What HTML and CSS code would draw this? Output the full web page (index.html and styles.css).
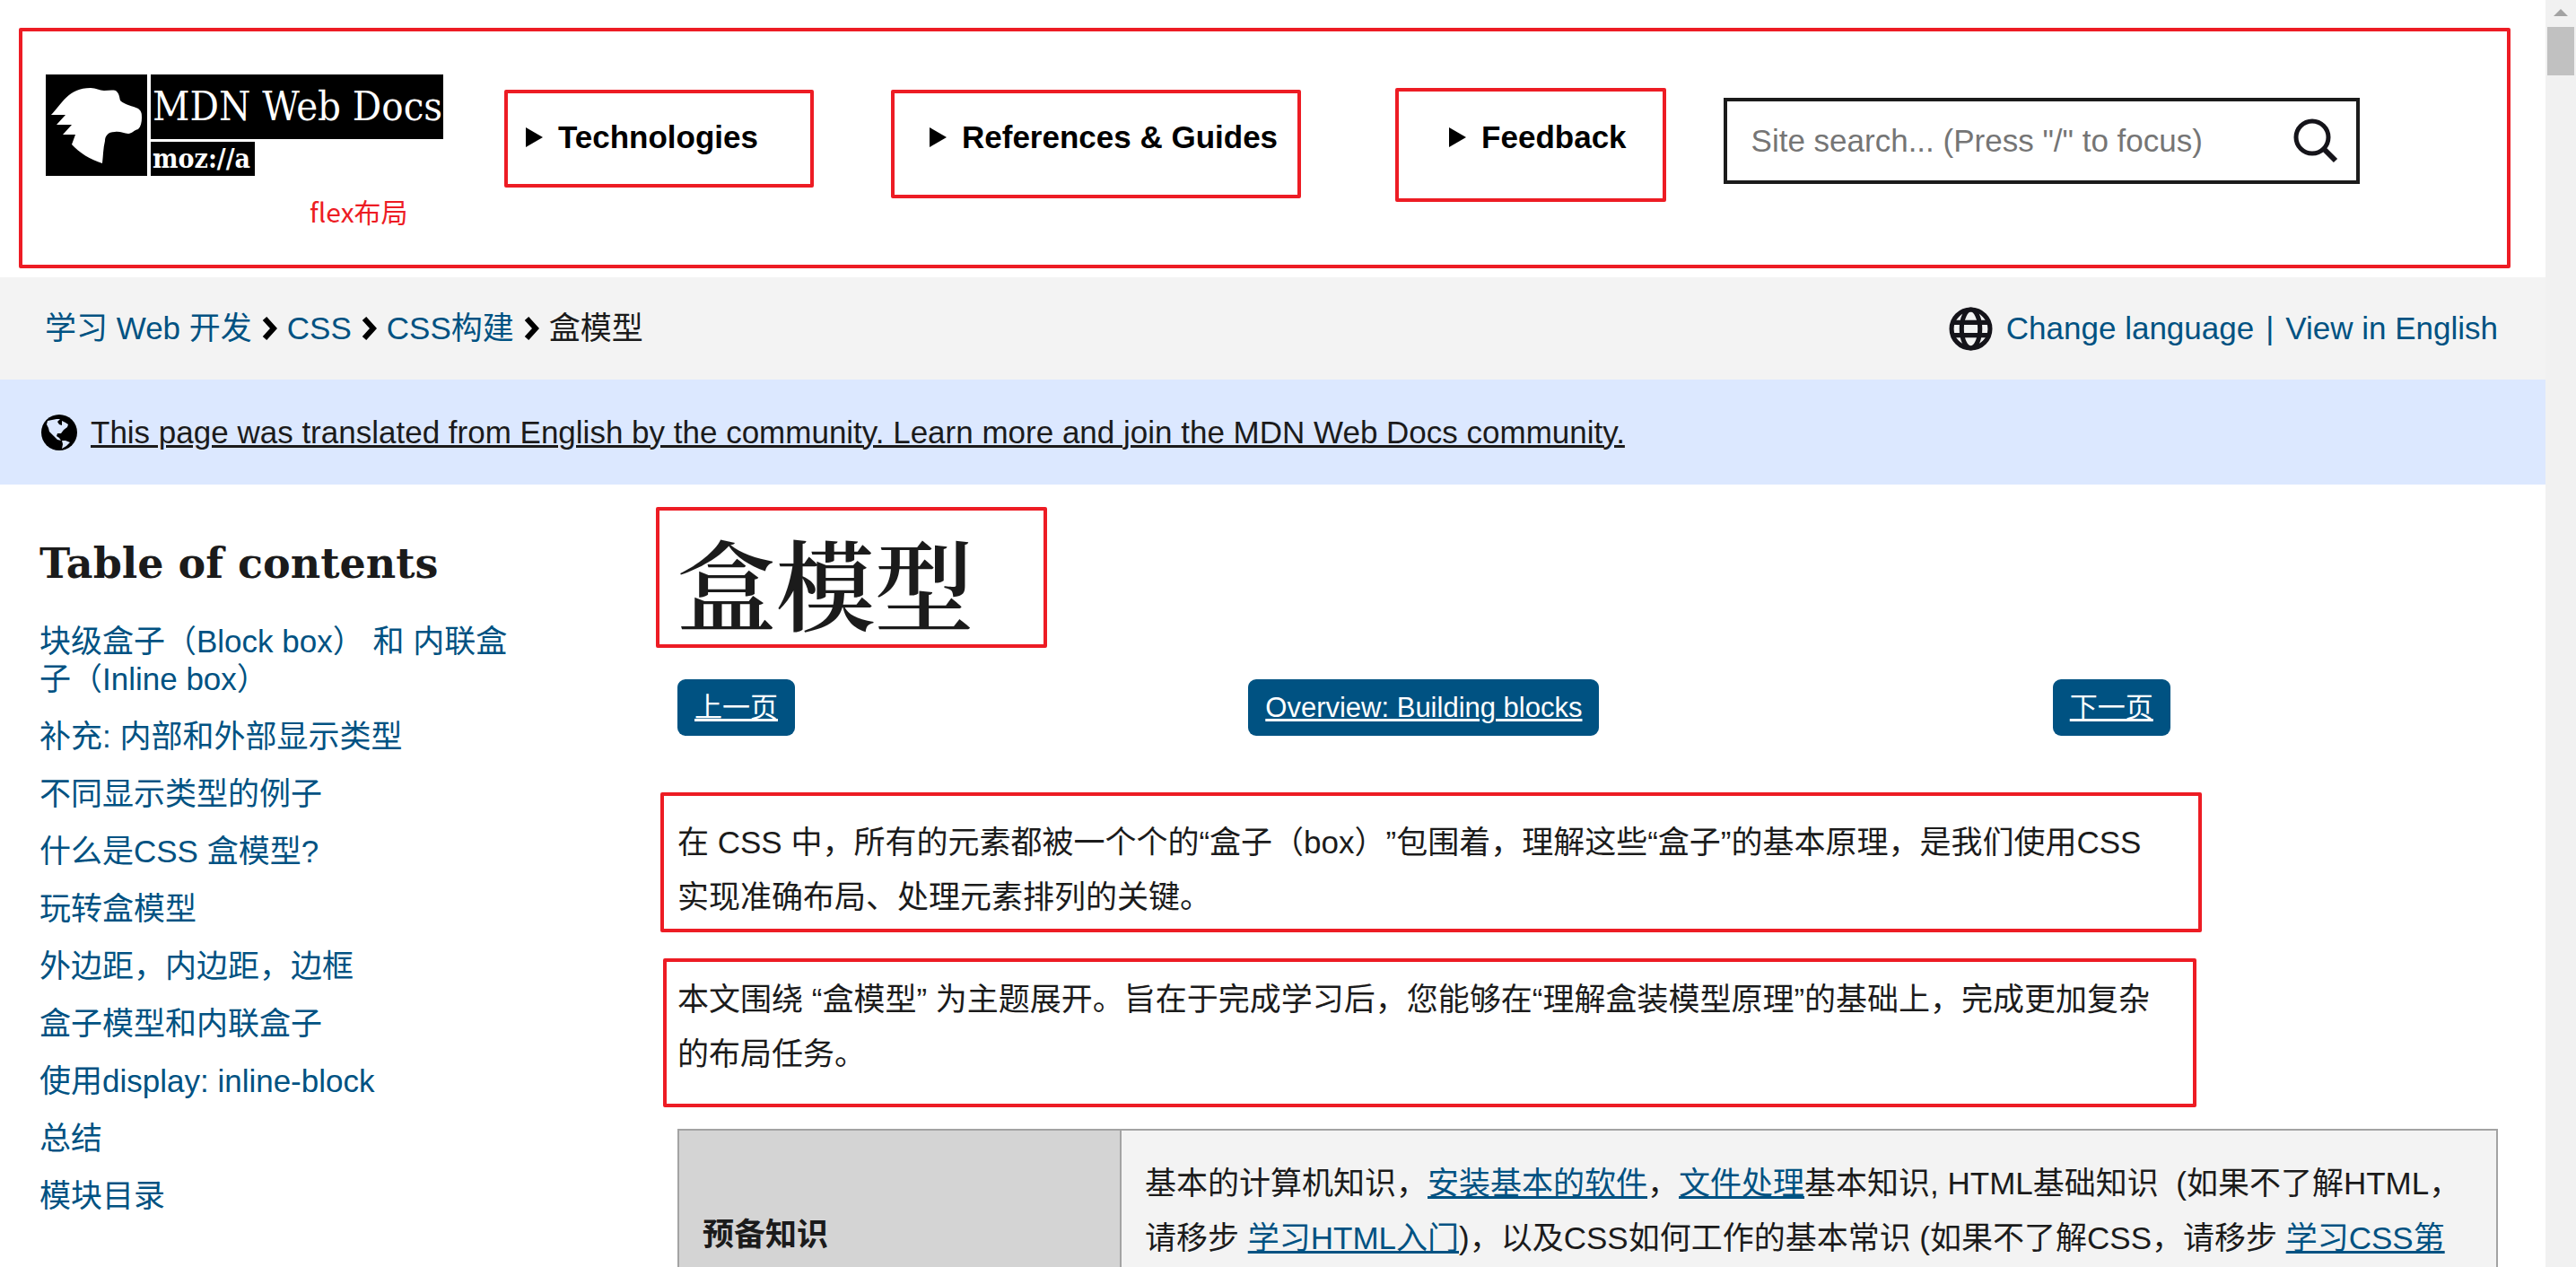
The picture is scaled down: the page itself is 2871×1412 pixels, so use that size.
FILE: index.html
```html
<!DOCTYPE html>
<html lang="zh-CN">
<head>
    <meta charset="UTF-8">
    <meta name="viewport" content="width=device-width, initial-scale=1.0">
    <title>盒模型 - 学习 Web 开发 | MDN</title>
    <link rel="stylesheet" href="styles.css">
</head>
<body>
    <div class="page">
        <header class="page-header note note-header">
            <a class="logo" href="#">
                <svg class="logo-icon" viewBox="0 0 113 113" aria-hidden="true">
                    <rect width="113" height="113" fill="#000"/>
                    <path fill="#fff" d="M6 45C18 33 25 15 50 15C56 15 60 18 65 18C69 18 74 17 78 18C82 21 82 25 83 29C88 34 97 35 103 38C107 41 107 44 107 48C107 53 106 58 103 61C98 62 96 66 92 66C87 66 83 63 77 64C69 64 66 69 66 74C64 82 64 90 63 99C50 95 37 87 29 78L33 67L19 67L29 56L12 56L22 45Z"/>
                </svg>
                <span class="logo-words">
                    <span class="logo-title">MDN Web Docs</span>
                    <span class="logo-moz">moz://a</span>
                </span>
            </a>
            <nav class="main-menu">
                <button type="button" class="note note-tech"><i class="arrow"></i>Technologies</button>
                <button type="button" class="note note-refs"><i class="arrow"></i>References &amp; Guides</button>
                <button type="button" class="note note-feedback"><i class="arrow"></i>Feedback</button>
            </nav>
            <form class="search" role="search">
                <input type="search" aria-label="Site search" placeholder='Site search... (Press "/" to focus)'>
                <button type="button" aria-label="Search">
                    <svg viewBox="0 0 50 50" fill="none" stroke="#15141a">
                        <circle cx="21" cy="21" r="18" stroke-width="5"/>
                        <path d="M34 34L47 47" stroke-width="6"/>
                    </svg>
                </button>
            </form>
            <span class="note-text">flex布局</span>
        </header>

        <div class="breadcrumb-bar">
            <nav class="breadcrumbs">
                <a href="#">学习 Web 开发</a>
                <svg class="chevron" viewBox="0 0 17 26"><path d="M3 2L13 13L3 24"/></svg>
                <a href="#">CSS</a>
                <svg class="chevron" viewBox="0 0 17 26"><path d="M3 2L13 13L3 24"/></svg>
                <a href="#">CSS构建</a>
                <svg class="chevron" viewBox="0 0 17 26"><path d="M3 2L13 13L3 24"/></svg>
                <span>盒模型</span>
            </nav>
            <div class="languages">
                <svg class="language-icon" viewBox="0 0 48 48" fill="none" stroke="#15141a" stroke-width="5">
                    <circle cx="24" cy="24" r="21"/>
                    <ellipse cx="24" cy="24" rx="10" ry="21"/>
                    <path d="M4 17H44M4 31H44"/>
                </svg>
                <a href="#">Change language</a>
                <span class="divider">|</span>
                <a href="#">View in English</a>
            </div>
        </div>

        <div class="notice">
            <svg class="notice-icon" viewBox="0 0 40 40">
                <circle cx="20" cy="20" r="20" fill="#000"/>
                <path fill="#dce8ff" d="M7 7L12 6L17 5L21 5L18 8L20 11L23 12L23 7L27 9L30 11L29 14L25 17L22 21L18 21L17 24L20 26L22 29L18 28L14 24L9 19L8 15L6 11Z"/>
                <path fill="#dce8ff" d="M23 29L27 29L32 31L28 35L23 38L24 33Z"/>
            </svg>
            <a href="#">This page was translated from English by the community. Learn more and join the MDN Web Docs community.</a>
        </div>

        <div class="content">
            <aside class="toc">
                <h2>Table of contents</h2>
                <ul>
                    <li><a href="#">块级盒子（Block box） 和 内联盒子（Inline box）</a></li>
                    <li><a href="#">补充: 内部和外部显示类型</a></li>
                    <li><a href="#">不同显示类型的例子</a></li>
                    <li><a href="#">什么是CSS 盒模型?</a></li>
                    <li><a href="#">玩转盒模型</a></li>
                    <li><a href="#">外边距，内边距，边框</a></li>
                    <li><a href="#">盒子模型和内联盒子</a></li>
                    <li><a href="#">使用display: inline-block</a></li>
                    <li><a href="#">总结</a></li>
                    <li><a href="#">模块目录</a></li>
                </ul>
            </aside>

            <main class="article">
                <h1><span class="note note-title">盒模型</span></h1>
                <div class="prev-next">
                    <a href="#">上一页</a>
                    <a href="#">Overview: Building blocks</a>
                    <a href="#">下一页</a>
                </div>
                <p class="note note-intro">在 CSS 中，所有的元素都被一个个的“盒子（box）”包围着，理解这些“盒子”的基本原理，是我们使用CSS实现准确布局、处理元素排列的关键。</p>
                <p class="note note-goal">本文围绕 “盒模型” 为主题展开。旨在于完成学习后，您能够在“理解盒装模型原理”的基础上，完成更加复杂的布局任务。</p>
                <table>
                    <tbody>
                        <tr>
                            <th scope="row">预备知识</th>
                            <td>基本的计算机知识，<a href="#">安装基本的软件</a>，<a href="#">文件处理</a>基本知识, HTML基础知识&nbsp; (如果不了解HTML，请移步 <a href="#">学习HTML入门</a>)，以及CSS如何工作的基本常识 (如果不了解CSS，请移步 <a href="#">学习CSS第一步</a>)。</td>
                        </tr>
                    </tbody>
                </table>
            </main>
        </div>
    </div>

    <div class="scrollbar" aria-hidden="true">
        <div class="scroll-up"></div>
        <div class="scroll-thumb"></div>
    </div>
</body>
</html>
```

FILE: styles.css
```css
* {
    box-sizing: border-box;
}
body {
    margin: 0;
    display: flex;
    height: 100vh;
    overflow: hidden;
    font-family: "Liberation Sans", Arial, "Noto Sans CJK SC", sans-serif;
    font-size: 35px;
    line-height: 42px;
    color: #1b1b1b;
    background-color: #fff;
    text-spacing-trim: space-all;
}
a {
    color: #005282;
    text-decoration: none;
}
button {
    font: inherit;
    color: #000;
    background: none;
    border: none;
    padding: 0;
}
.page {
    flex: 1;
    min-width: 0;
}

/* red review marks */
.note {
    position: relative;
}
.note::after {
    content: "";
    position: absolute;
    border: 4px solid #ed1c24;
    border-radius: 2px;
    pointer-events: none;
}
.note-header::after {
    inset: 31px 39px 10px 21px;
}
.note-tech::after {
    inset: -31px -62px -34px -24px;
}
.note-refs::after {
    inset: -31px -26px -46px -43px;
}
.note-feedback::after {
    inset: -33px -44px -50px -60px;
}
.note-title::after {
    inset: -26px -82px -19px -24px;
}
.note-intro::after {
    inset: -25px -35px -9px -19px;
}
.note-goal::after {
    inset: -15px -29px -29px -16px;
}
.note-text {
    position: absolute;
    left: 345px;
    top: 214px;
    font-family: "Noto Sans CJK SC", sans-serif;
    font-size: 30px;
    color: #ed1c24;
}

/* header */
.page-header {
    display: flex;
    align-items: flex-start;
    height: 309px;
    padding: 83px 51px 0;
}
.logo {
    display: flex;
    gap: 4px;
    margin-right: 92px;
}
.logo-icon {
    width: 113px;
    height: 113px;
}
.logo-words {
    display: flex;
    flex-direction: column;
    align-items: flex-start;
    gap: 3px;
    font-family: "DejaVu Serif Condensed", "DejaVu Serif", serif;
    color: #fff;
    white-space: nowrap;
}
.logo-title {
    width: 326px;
    height: 72px;
    padding-left: 2px;
    font-size: 45px;
    line-height: 72px;
    background-color: #000;
}
.logo-moz {
    width: 116px;
    height: 38px;
    padding-left: 2px;
    font-size: 30px;
    font-weight: bold;
    line-height: 38px;
    background-color: #000;
}
.main-menu {
    display: flex;
    gap: 191px;
    margin: 48px 108px 0 0;
}
.main-menu button {
    display: flex;
    align-items: center;
    gap: 17px;
    font-weight: bold;
    line-height: 44px;
    white-space: nowrap;
}
.arrow {
    border-left: 19px solid #000;
    border-top: 11px solid transparent;
    border-bottom: 11px solid transparent;
}
.search {
    display: flex;
    align-items: center;
    width: 709px;
    height: 96px;
    margin-top: 26px;
    padding: 0 20px 0 27px;
    border: 4px solid #1b1b1b;
}
.search input {
    flex: 1;
    min-width: 0;
    padding: 0;
    border: none;
    outline: none;
    font: inherit;
    background: none;
}
.search input::placeholder {
    color: #757575;
}
.search button {
    display: flex;
}
.search svg {
    width: 50px;
    height: 50px;
}

/* breadcrumbs and languages */
.breadcrumb-bar {
    display: flex;
    justify-content: space-between;
    align-items: center;
    height: 114px;
    padding: 0 53px 0 50px;
    background-color: #f3f3f3;
}
.breadcrumbs,
.languages {
    display: flex;
    align-items: center;
    gap: 11px;
}
.chevron {
    width: 17px;
    height: 26px;
    fill: none;
    stroke: #000;
    stroke-width: 6;
}
.language-icon {
    width: 49px;
    height: 49px;
}
.languages {
    gap: 15px;
}
.divider {
    color: #005282;
    margin: 0 -2px;
}

/* translation notice */
.notice {
    display: flex;
    align-items: center;
    gap: 15px;
    height: 117px;
    padding: 0 46px;
    background-color: #dce8ff;
}
.notice a {
    color: #1b1b1b;
    text-decoration: underline;
    text-decoration-thickness: 3px;
}
.notice-icon {
    width: 40px;
    height: 40px;
}

/* content */
.content {
    display: grid;
    grid-template-columns: 540px 1fr;
    column-gap: 171px;
    padding: 0 53px 0 44px;
}
.toc {
    padding-top: 60px;
}
.toc h2 {
    margin: 0 0 38px;
    font-family: "DejaVu Serif", serif;
    font-size: 46px;
    line-height: 56px;
}
.toc ul {
    list-style: none;
    margin: 0;
    padding: 0;
    display: grid;
    gap: 22px;
}
.article {
    padding-top: 51px;
}
.article h1 {
    margin: 0 0 54px;
    font-family: "Noto Serif CJK SC", "Noto Sans CJK SC", serif;
    font-size: 110px;
    font-weight: 600;
    line-height: 112px;
}
.note-title {
    display: inline-block;
}
.prev-next {
    display: flex;
    justify-content: space-between;
    width: 82%;
    margin-bottom: 88px;
}
.prev-next a {
    padding: 0 19px;
    border-radius: 9px;
    font-size: 31px;
    line-height: 63px;
    color: #fff;
    background-color: #005282;
    text-decoration: underline;
    text-decoration-thickness: 3px;
}
.article p {
    width: 82%;
    margin: 0 0 53px;
    line-height: 61px;
}
.article table {
    width: 100%;
    border-collapse: collapse;
    line-height: 61px;
}
.article th,
.article td {
    padding: 28px 26px;
    border: 2px solid #a3a3a3;
}
.article th {
    width: 493px;
    padding-bottom: 36px;
    text-align: left;
    background-color: #d4d4d4;
}
.article td {
    background-color: #f3f3f3;
}
.article td a {
    text-decoration: underline;
    text-decoration-thickness: 3px;
}

/* scrollbar */
.scrollbar {
    width: 34px;
    padding: 10px 2px 0;
    background-color: #f1f1f1;
}
.scroll-up {
    width: 16px;
    margin: 0 auto 12px;
    border-left: 8px solid transparent;
    border-right: 8px solid transparent;
    border-bottom: 8px solid #a3a3a3;
}
.scroll-thumb {
    height: 54px;
    background-color: #c1c1c1;
}
```
